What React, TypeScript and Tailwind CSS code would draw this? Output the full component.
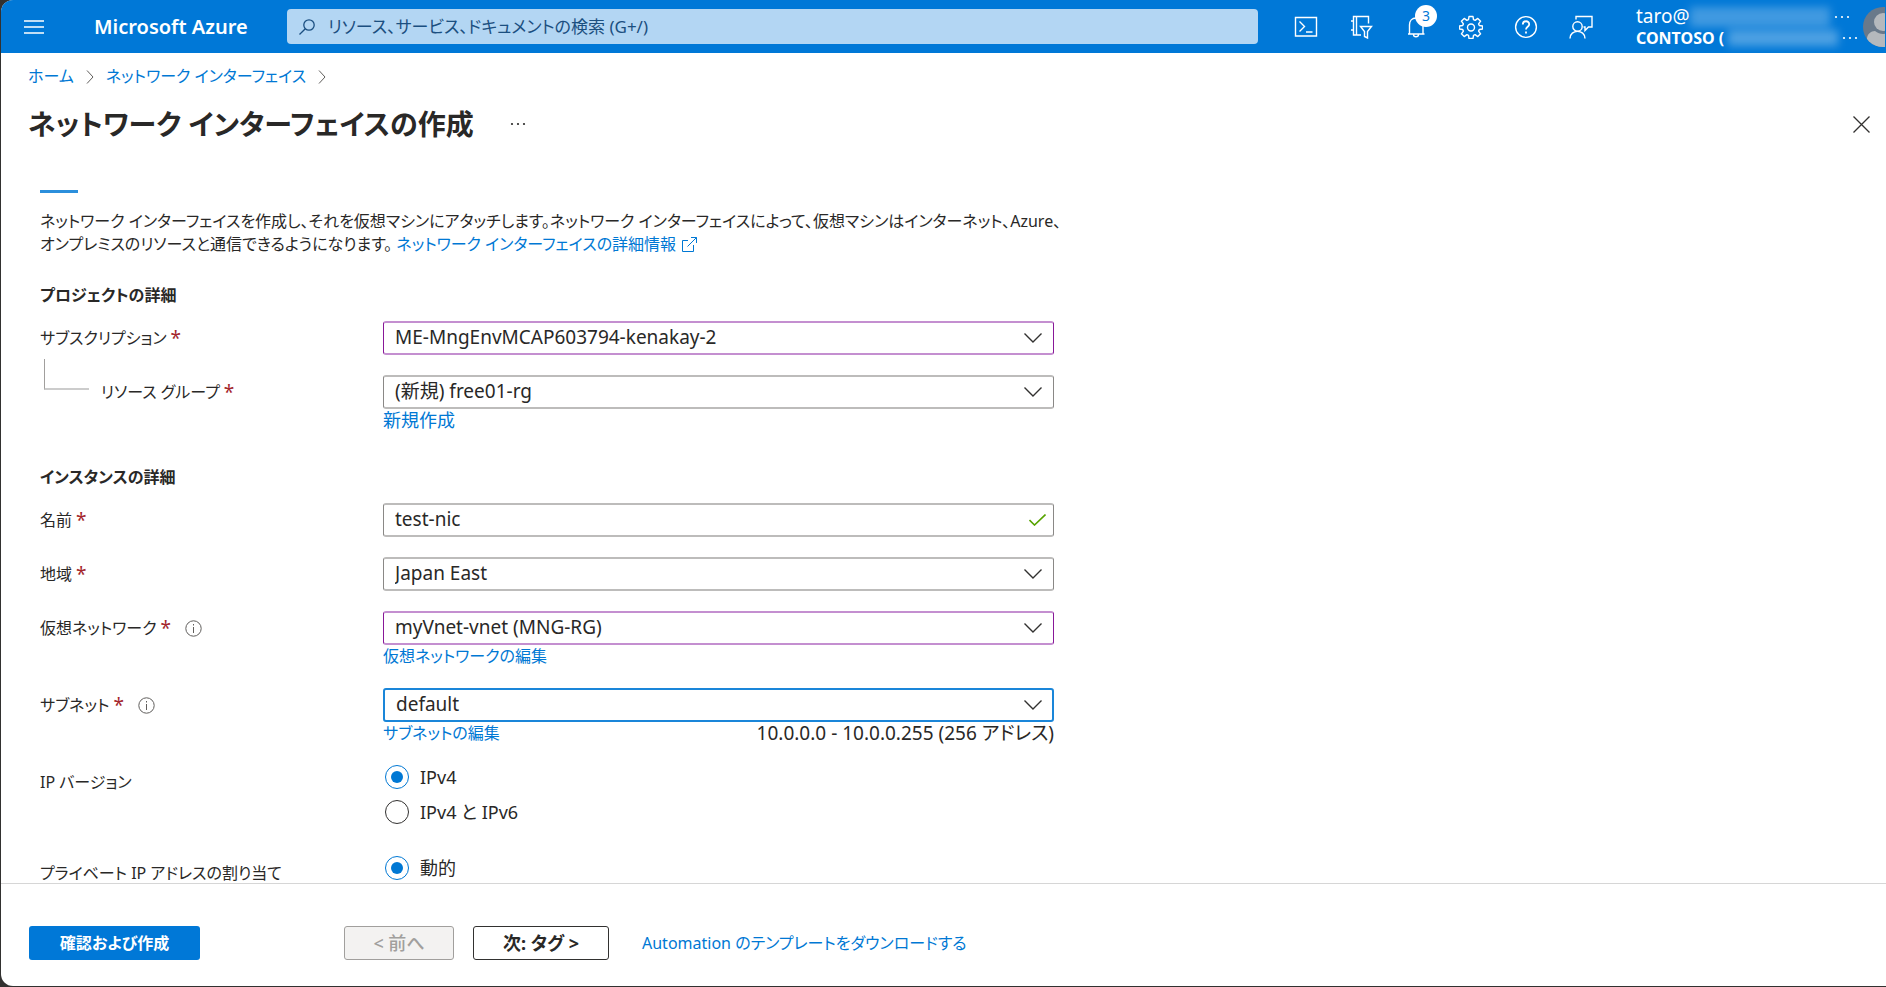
import { ReactNode, useState } from "react";
import { clsx } from "clsx";

type Tone = "default" | "edited" | "focused";

const toneClasses: Record<Tone, string> = {
  default: "border-x border-y-2 border-x-[#8a8886] border-y-[#bdbcbb]",
  edited: "border-x border-y-2 border-x-[#881798] border-y-[#c48fd0]",
  focused: "border-2 border-[#1a86d9]",
};

function Icon({ children, size = 24 }: { children: ReactNode; size?: number }) {
  return (
    <svg
      width={size}
      height={size}
      viewBox="0 0 24 24"
      fill="none"
      stroke="currentColor"
      strokeWidth="1.4"
      aria-hidden="true"
    >
      {children}
    </svg>
  );
}

function Dots() {
  return (
    <svg width="16" height="4" viewBox="0 0 16 4" fill="currentColor" aria-hidden="true">
      <circle cx="2" cy="2" r="1.100" />
      <circle cx="8" cy="2" r="1.100" />
      <circle cx="14" cy="2" r="1.100" />
    </svg>
  );
}

const headerActions = [
  {
    label: "Cloud Shell",
    icon: (
      <Icon>
        <path d="M1.500 2.500h21v18.500h-21zM5.500 6.500l5 5-5 5M12 17h6.500" />
      </Icon>
    ),
  },
  {
    label: "ディレクトリとサブスクリプション",
    icon: (
      <Icon>
        <path d="M19.500 8.500V1.500H4.500v18.500H12M7.500 1.500v18.500M2 6h2.500M2 15h2.500M11.500 11.500h11l-4 5v6.500l-3-1.500v-5z" />
      </Icon>
    ),
  },
  {
    label: "通知",
    badge: 3,
    icon: (
      <Icon>
        <path d="M5.500 19V10c0-4 2.500-7 6.500-7s7 3 7 7v9M4 19h16.500M9.500 19.500c0 3 5 3 5 0" />
      </Icon>
    ),
  },
  {
    label: "設定",
    icon: (
      <Icon>
        <path
          strokeLinejoin="round"
          d="M10 1.500h4l.5 3.200 1.600.7 2.700-2 2.800 2.800-2 2.700.7 1.600 3.200.5v3l-3.200.5-.7 1.600 2 2.700-2.800 2.800-2.700-2-1.600.7-.5 3.200h-4l-.5-3.200-1.600-.7-2.700 2-2.800-2.800 2-2.700-.7-1.600L.5 14v-3l3.200-.5.7-1.600-2-2.700 2.800-2.800 2.700 2 1.600-.7z"
        />
        <circle cx="12" cy="12.500" r="3.500" />
      </Icon>
    ),
  },
  {
    label: "ヘルプ",
    icon: (
      <Icon>
        <circle cx="12" cy="12" r="10.400" />
        <path d="M8.800 9.500c0-4.300 6.400-4.300 6.400-.3 0 2.600-3.200 2.600-3.200 5.300M12 16.500v2" strokeWidth="1.8" />
      </Icon>
    ),
  },
  {
    label: "フィードバック",
    icon: (
      <Icon>
        <circle cx="8.500" cy="11.500" r="4.700" />
        <path d="M1 23.500c0-9.500 15-9.500 15 0M7 4.500V1.500h16V12h-3.500l-3.500 3.500V12h-1.500" />
      </Icon>
    ),
  },
];

function Header() {
  return (
    <header className="flex h-[53px] shrink-0 items-center bg-[#0078d7] text-white">
      <button type="button" aria-label="メニュー" className="ml-[19px] flex h-8 w-7 shrink-0 items-center justify-center">
        <svg width="20" height="14" viewBox="0 0 20 14" stroke="currentColor" strokeWidth="1.5" aria-hidden="true">
          <path d="M0 1h20M0 7h20M0 13h20" />
        </svg>
      </button>
      <a href="#" className="ml-[46px] w-[193px] shrink-0 text-xl font-semibold whitespace-nowrap">
        Microsoft Azure
      </a>
      <label className="flex h-[35px] w-[971px] min-w-0 items-center rounded-sm bg-[#b3d6f3] pl-3 text-[#1b4f80]">
        <svg width="16" height="16" viewBox="0 0 16 16" fill="none" stroke="currentColor" strokeWidth="1.3" aria-hidden="true">
          <circle cx="10" cy="6" r="5.200" />
          <path d="M6.300 9.700L.5 15.500" />
        </svg>
        <input
          type="search"
          aria-label="検索"
          placeholder="リソース、サービス、ドキュメントの検索 (G+/)"
          className="ml-[13px] min-w-0 flex-1 bg-transparent text-[17px] outline-none placeholder:text-[#1b4f80]"
        />
      </label>
      <nav className="ml-5 flex shrink-0">
        {headerActions.map(({ label, icon, badge }) => (
          <button key={label} type="button" aria-label={label} className="relative flex h-[53px] w-[55px] items-center justify-center">
            {icon}
            {badge && (
              <span className="absolute top-[5px] left-[27px] flex size-[22px] items-center justify-center rounded-full bg-white text-sm text-[#0078d7]">
                {badge}
              </span>
            )}
          </button>
        ))}
      </nav>
      <div className="ml-7 flex w-[227px] shrink-0 flex-col whitespace-nowrap">
        <div className="flex h-[22px] items-center text-[19px]">
          taro@
          <span className="mr-1 h-5 w-[140px] bg-white/25 blur-xs" />
          <Dots />
        </div>
        <div className="flex h-5 items-center text-base font-bold">
          CONTOSO (
          <span className="mx-1 h-4 w-[110px] bg-white/30 blur-xs" />
          <Dots />
        </div>
      </div>
      <div className="w-[22px] shrink-0 overflow-hidden">
        <svg width="40" height="40" viewBox="0 0 40 40" aria-hidden="true">
          <clipPath id="avatar">
            <circle cx="20" cy="20" r="20" />
          </clipPath>
          <g clipPath="url(#avatar)">
            <path fill="#69798a" d="M0 0h40v40H0z" />
            <circle cx="20" cy="15" r="9" fill="#b5b9bd" />
            <path fill="#b5b9bd" d="M4 40V32c0-5 4-8 8-8 5 4 11 4 16 0 4 0 8 3 8 8v8z" />
          </g>
        </svg>
      </div>
    </header>
  );
}

function Crumb({ children }: { children: ReactNode }) {
  return (
    <li className="flex items-center gap-3">
      <a href="#" className="text-[#0078d4]">
        {children}
      </a>
      <svg width="8" height="14" viewBox="0 0 8 14" fill="none" stroke="#605e5c" aria-hidden="true">
        <path d="M1 .5L7 7l-6 6.500" />
      </svg>
    </li>
  );
}

function InfoIcon() {
  return (
    <svg width="17" height="17" viewBox="0 0 17 17" fill="none" stroke="#605e5c" className="ml-3.5" aria-hidden="true">
      <circle cx="8.500" cy="8.500" r="7.700" />
      <path d="M8.500 7v6M8.500 4v1.500" />
    </svg>
  );
}

interface RowProps {
  label: string;
  htmlFor?: string;
  required?: boolean;
  info?: boolean;
  nested?: boolean;
  children: ReactNode;
}

function Row({ label, htmlFor, required, info, nested, children }: RowProps) {
  const content = (
    <>
      {label}
      {required && <span className="ml-1 text-[19px] text-[#a4262c]">*</span>}
      {info && <InfoIcon />}
    </>
  );
  const className = "flex h-[34px] items-center";

  return (
    <div className="grid grid-cols-[343px_minmax(0,671px)] items-start">
      <div className="relative">
        {nested && <span className="absolute -top-4 left-1 h-[31px] w-[45px] border-b-2 border-l border-b-[#cccccc] border-l-[#a19f9d]" />}
        {htmlFor ? (
          <label htmlFor={htmlFor} className={clsx(className, nested && "pl-[61px]")}>
            {content}
          </label>
        ) : (
          <div className={className}>{content}</div>
        )}
      </div>
      <div>{children}</div>
    </div>
  );
}

function Select({ id, value, tone = "default" }: { id: string; value: string; tone?: Tone }) {
  return (
    <div className="relative">
      <select
        id={id}
        defaultValue={value}
        className={clsx(
          "block h-[34px] w-full appearance-none rounded-[3px] bg-white pr-12 pb-0.5 pl-[11px] text-[19px] outline-none",
          toneClasses[tone]
        )}
      >
        <option>{value}</option>
      </select>
      <svg
        width="18"
        height="10"
        viewBox="0 0 18 10"
        fill="none"
        stroke="#323130"
        strokeWidth="1.4"
        className="pointer-events-none absolute top-3 right-3"
        aria-hidden="true"
      >
        <path d="M.5 .5L9 9l8.500-8.500" />
      </svg>
    </div>
  );
}

function Radio({ name, label, checked, onChange }: { name: string; label: string; checked: boolean; onChange: () => void }) {
  return (
    <label className="flex h-6 items-center gap-[11px] pl-0.5 text-lg">
      <input
        type="radio"
        name={name}
        checked={checked}
        onChange={onChange}
        className="grid size-6 appearance-none place-items-center rounded-full border border-[#323130] before:size-3 before:rounded-full checked:border-[#0078d4] checked:before:bg-[#0078d4]"
      />
      {label}
    </label>
  );
}

export default function App() {
  const [ipVersion, setIpVersion] = useState("IPv4");
  const [allocation, setAllocation] = useState("動的");

  return (
    <div className="h-screen bg-[#323130] pb-px pl-px font-['Noto_Sans','Noto_Sans_CJK_JP',sans-serif] text-base leading-[23px] text-[#292827] [font-feature-settings:'palt']">
      <div className="flex h-full flex-col overflow-hidden rounded-l-xl bg-white">
        <Header />

        <main className="min-h-0 flex-1 overflow-hidden">
          <nav aria-label="階層" className="mt-3 pl-[27px]">
            <ol className="flex gap-3">
              <Crumb>ホーム</Crumb>
              <Crumb>ネットワーク インターフェイス</Crumb>
            </ol>
          </nav>
          <div className="mt-3 flex h-12 items-center pr-4 pl-[27px]">
            <h1 className="text-[28px] font-bold">ネットワーク インターフェイスの作成</h1>
            <button type="button" aria-label="その他" className="ml-9">
              <Dots />
            </button>
            <button type="button" aria-label="閉じる" className="ml-auto">
              <svg width="17" height="17" viewBox="0 0 17 17" stroke="#323130" strokeWidth="1.3" aria-hidden="true">
                <path d="M.5 .5l16 16M16.500 .5l-16 16" />
              </svg>
            </button>
          </div>

          <form className="mt-[42px] pl-[39px]">
            <div className="h-[3px] w-[38px] bg-[#2b8fdc]" />
            <p className="mt-[17px]">
              ネットワーク インターフェイスを作成し、それを仮想マシンにアタッチします。ネットワーク インターフェイスによって、仮想マシンはインターネット、Azure、
              <br />
              オンプレミスのリソースと通信できるようになります。{" "}
              <a href="#" className="inline-flex items-center gap-1.5 text-[#0078d4]">
                ネットワーク インターフェイスの詳細情報
                <svg width="15" height="15" viewBox="0 0 15 15" fill="none" stroke="currentColor" aria-hidden="true">
                  <path d="M6 3.500H.5v11h11V8M9 .5h5.500V6M14.500 .5L5.500 9.500" />
                </svg>
              </a>
            </p>

            <h2 className="mt-7 font-bold">プロジェクトの詳細</h2>
            <div className="mt-[14px] flex flex-col gap-5">
              <Row label="サブスクリプション" htmlFor="subscription" required>
                <Select id="subscription" value="ME-MngEnvMCAP603794-kenakay-2" tone="edited" />
              </Row>
              <Row label="リソース グループ" htmlFor="resource-group" required nested>
                <Select id="resource-group" value="(新規) free01-rg" />
                <a href="#" className="block text-lg leading-[23px] text-[#0078d4]">
                  新規作成
                </a>
              </Row>
            </div>

            <h2 className="mt-[34px] font-bold">インスタンスの詳細</h2>
            <div className="mt-[14px] flex flex-col gap-5">
              <Row label="名前" htmlFor="name" required>
                <div className="relative">
                  <input
                    id="name"
                    defaultValue="test-nic"
                    className={clsx(
                      "block h-[34px] w-full rounded-[3px] bg-white pr-10 pb-0.5 pl-[11px] text-[19px] outline-none",
                      toneClasses.default
                    )}
                  />
                  <svg width="17" height="12" viewBox="0 0 17 12" fill="none" stroke="#57a300" strokeWidth="1.6" className="absolute top-[11px] right-2" aria-hidden="true">
                    <path d="M.5 6l5 5L16.500 .5" />
                  </svg>
                </div>
              </Row>
              <Row label="地域" htmlFor="region" required>
                <Select id="region" value="Japan East" />
              </Row>
              <Row label="仮想ネットワーク" htmlFor="vnet" required info>
                <Select id="vnet" value="myVnet-vnet (MNG-RG)" tone="edited" />
                <a href="#" className="block text-[#0078d4]">
                  仮想ネットワークの編集
                </a>
              </Row>
              <Row label="サブネット" htmlFor="subnet" required info>
                <Select id="subnet" value="default" tone="focused" />
                <div className="flex justify-between">
                  <a href="#" className="text-[#0078d4]">
                    サブネットの編集
                  </a>
                  <span className="text-[19px] leading-[23px]">10.0.0.0 - 10.0.0.255 (256 アドレス)</span>
                </div>
              </Row>
              <Row label="IP バージョン">
                <div className="flex flex-col gap-[11px]">
                  {["IPv4", "IPv4 と IPv6"].map((v) => (
                    <Radio key={v} name="ip-version" label={v} checked={ipVersion === v} onChange={() => setIpVersion(v)} />
                  ))}
                </div>
              </Row>
              <div className="mt-3">
                <Row label="プライベート IP アドレスの割り当て">
                  <Radio name="allocation" label="動的" checked={allocation === "動的"} onChange={() => setAllocation("動的")} />
                </Row>
              </div>
            </div>
          </form>
        </main>

        <footer className="flex h-[103px] shrink-0 items-start border-t border-[#d6d6d6] pt-[42px] pl-7">
          <div className="flex w-[315px]">
            <button type="button" className="h-[34px] w-[171px] rounded-[3px] bg-[#0078d7] font-bold text-white">
              確認および作成
            </button>
          </div>
          <div className="flex items-center gap-[19px]">
            <button type="button" disabled className="h-[34px] w-[110px] rounded-[3px] border border-[#a19f9d] bg-[#f3f2f1] text-lg font-medium text-[#a19f9d]">
              &lt; 前へ
            </button>
            <button type="button" className="h-[34px] w-[136px] rounded-[3px] border border-[#323130] bg-white text-lg font-bold">
              次: タグ &gt;
            </button>
            <a href="#" className="ml-3.5 text-[#0078d4]">
              Automation のテンプレートをダウンロードする
            </a>
          </div>
        </footer>
      </div>
    </div>
  );
}
